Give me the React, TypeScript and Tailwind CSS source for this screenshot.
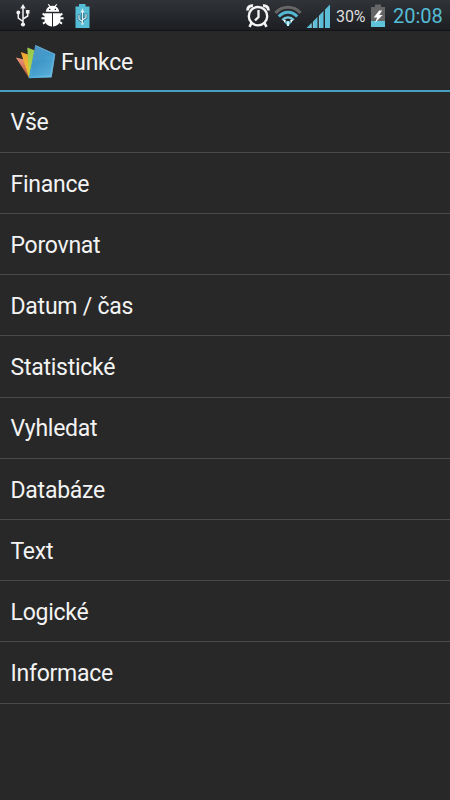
const rows = [
  { label: "Vše" },
  { label: "Finance" },
  { label: "Porovnat" },
  { label: "Datum / čas" },
  { label: "Statistické" },
  { label: "Vyhledat" },
  { label: "Databáze" },
  { label: "Text" },
  { label: "Logické" },
  { label: "Informace" },
];

function Usb() {
  return (
    <svg className="h-[23px] w-[14px]" viewBox="0 0 14 23" fill="none" stroke="#f2f2f2" strokeWidth="1.5">
      <path d="M7 3v17M7 17.500L2.300 14V8.500M7 15l4.700-3V6.500" />
      <path d="M7 0L9.700 4.500H4.300Z" fill="#f2f2f2" stroke="none" />
      <circle cx="7" cy="20.500" r="2.100" fill="#f2f2f2" stroke="none" />
      <circle cx="2.300" cy="8.500" r="1.900" fill="#f2f2f2" stroke="none" />
      <path d="M9.900 6h3.600v3.600H9.900z" fill="#f2f2f2" stroke="none" />
    </svg>
  );
}

function Android() {
  return (
    <svg className="ml-[11px] h-[23px] w-[23px]" viewBox="0 0 23 23" fill="#fff">
      <path d="M4.800 7.800C5 5 6.500 3.300 8.300 2.500L6.800.6l.9-.6 1.700 2a7 7 0 0 1 4.200 0L15.300 0l.9.6-1.500 1.900c1.800.8 3.300 2.500 3.500 5.300Z" />
      <path d="M3.500 9.200H11V22.500C6.500 22 3.500 19 3.500 15.500ZM12 9.200h7.500v6.300c0 3.500-3 6.500-7.500 7Z" />
      <path d="M4 11.500L1.700 9.500M19 11.500l2.300-2M4 14.300H.5M19 14.300h3.500M4.500 18l-2.500 1.700M18.500 18l2.500 1.700" stroke="#fff" strokeWidth="2" />
      <path d="M8 4.800h1.300v1.300H8zM13.700 4.800H15v1.300h-1.300z" fill="#22252a" />
    </svg>
  );
}

function UsbBattery() {
  return (
    <svg className="ml-[11px] h-[24px] w-[15px]" viewBox="0 0 15 24" fill="none">
      <path d="M4 0h6.500v2.500H14.500V24H.5V2.500H4Z" fill="#55bdd5" />
      <g stroke="#346f84" strokeWidth="2.600">
        <path d="M7.500 6v14M7.500 17.500L4 15v-4.500M7.500 16L11 13.500V9.500" />
      </g>
      <g stroke="#dcf4f8" strokeWidth="1.100">
        <path d="M7.500 7v12M7.500 17.500L4 15v-4M7.500 16L11 13.500V10" />
        <path d="M7.500 5.500L8.700 8H6.300Z" fill="#dcf4f8" />
        <circle cx="7.500" cy="19.500" r=".8" />
      </g>
    </svg>
  );
}

function Alarm() {
  return (
    <svg className="h-[24px] w-[24px]" viewBox="0 0 24 24" fill="none" stroke="#f5f5f5">
      <circle cx="12" cy="12.200" r="9.200" strokeWidth="2.400" />
      <path d="M12.500 6v7L9 16.500" strokeWidth="2.300" />
      <path d="M1.800 6.500C1.300 3.500 3.500 1.300 7 1.800M17 1.800c3.500-.5 5.700 1.700 5.200 4.700" strokeWidth="2.900" />
      <path d="M5.500 19L3.500 22.800M18.500 19l2 3.800" strokeWidth="2.600" />
    </svg>
  );
}

function Wifi() {
  return (
    <svg className="ml-[4px] h-[23px] w-[28px]" viewBox="0 0 28 23" fill="none" strokeWidth="3">
      <path d="M1.500 9C8 1.300 20 1.300 26.500 9" stroke="#666" />
      <path d="M4.800 12.600c5-5.800 13.400-5.800 18.400 0" stroke="#53b9d3" />
      <path d="M8.300 16c3.200-3.500 8.200-3.500 11.400 0" stroke="#76cce0" strokeWidth="2.400" />
      <path d="M14 22.500l-3.600-4.200c2-1.900 5.200-1.900 7.200 0Z" fill="#62c2da" />
      <path d="M9 16l3-.2-1.200 3ZM19 16l-3-.2 1.200 3Z" fill="#fff" />
      <path d="M14 17.500V22" stroke="#e8fafd" strokeWidth="1.600" />
    </svg>
  );
}

function Signal() {
  return (
    <svg className="ml-[4px] h-[24px] w-[25px]" viewBox="0 0 25 24">
      <path d="M.5 24L5.500 19v5ZM7 24v-6.500L11.500 13v11ZM13 24V11.500L17.500 7v17ZM19 24V5.500L24 .5V24Z" fill="#5bbdd6" />
      <path d="M5.200 19.500V24M7.300 18v6M13.300 12v12" stroke="#a8d8e4" strokeWidth=".6" />
    </svg>
  );
}

function ChargingBattery() {
  return (
    <svg className="ml-[5px] h-[23px] w-[14px]" viewBox="0 0 14 23">
      <path d="M4 .5h6V3h4v20H0V3h4Z" fill="#666" />
      <path d="M0 17h14v6H0Z" fill="#5fc3da" />
      <path d="M8.200 6.500L2.700 13.500h3.500l-2.300 5.500 7.700-8H8.200l3-4.500Z" fill="#fff" />
    </svg>
  );
}

function Logo() {
  return (
    <svg className="mt-[3px] ml-[15px] h-[36px] w-[42px] shrink-0" viewBox="0 0 42 36">
      <defs>
        <linearGradient id="sheet" x1="0" y1="0" x2=".6" y2="1">
          <stop offset="0" stopColor="#4f92c0" />
          <stop offset=".55" stopColor="#429bcb" />
          <stop offset="1" stopColor="#62b9e2" />
        </linearGradient>
        <linearGradient id="red" x1="0" y1="0" x2="0" y2="1">
          <stop offset="0" stopColor="#e9957a" />
          <stop offset="1" stopColor="#b65131" />
        </linearGradient>
        <linearGradient id="gold" x1="0" y1="0" x2="0" y2="1">
          <stop offset="0" stopColor="#eea232" />
          <stop offset="1" stopColor="#efcc35" />
        </linearGradient>
        <linearGradient id="green" x1="0" y1="0" x2="0" y2="1">
          <stop offset="0" stopColor="#93c84d" />
          <stop offset="1" stopColor="#c1d748" />
        </linearGradient>
      </defs>
      <path d="M.8 13.500L9 15.500 14 34Z" fill="url(#red)" />
      <path d="M5.800 8.100L14.500 11 14 34Z" fill="url(#gold)" />
      <path d="M12.300 3.500L20 6.500 14 34.200Z" fill="url(#green)" />
      <path d="M20.300 1L40.300 10 36.500 33.500 13.700 34.200Z" fill="url(#sheet)" />
      <path d="M20.500 1.500L39.700 10.300 36.200 33.200" stroke="#77b8d8" strokeWidth=".7" fill="none" />
      <path d="M18 17L36 15l1 2-2 14-18 1Z" fill="#398fbe" opacity=".3" />
    </svg>
  );
}

export default function App() {
  return (
    <main className="flex h-[800px] w-[450px] flex-col overflow-hidden bg-[#282828] font-[Roboto,sans-serif] text-[#f3f3f3]">
      <div className="flex h-[31px] shrink-0 items-start border-b border-[#111316] bg-linear-to-b from-[#303338] to-[#1c1e22] pt-[4px] pl-[16px]">
        <Usb />
        <Android />
        <UsbBattery />
        <div className="ml-auto flex items-start">
          <Alarm />
          <Wifi />
          <Signal />
          <span className="ml-[5px] w-[30px] text-[16px] leading-[25px] tracking-[-0.1px] whitespace-nowrap text-[#dedede]">30%</span>
          <ChargingBattery />
          <span className="ml-[8px] w-[57px] text-[20px] leading-[25px] whitespace-nowrap text-[#55bdd5]">20:08</span>
        </div>
      </div>
      <header className="flex h-[60.500px] shrink-0 items-center border-b-2 border-[#469fc0]">
        <Logo />
        <h1 className="ml-[4px] pt-[6px] text-[23px] leading-[30px] tracking-[-0.25px]">Funkce</h1>
      </header>
      <ul className="flex flex-col">
        {rows.map((row) => (
          <li key={row.label} className="flex h-[61.220px] items-center border-b border-[#4a4a4a] pt-[3.500px] pl-[10.500px] text-[23px] leading-[30px] tracking-[-0.25px]">
            {row.label}
          </li>
        ))}
      </ul>
    </main>
  );
}
